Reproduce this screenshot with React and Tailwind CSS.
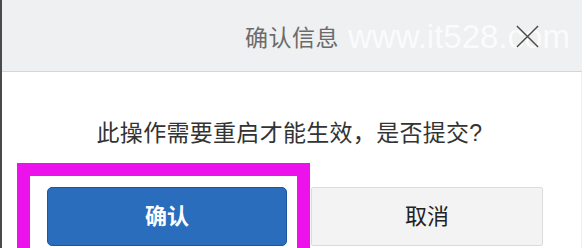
import React from "react";

const font = { fontFamily: '"Liberation Sans", "Noto Sans CJK SC", sans-serif' };

const App = () => {
  return (
    <div
      className="relative w-[588px] h-[248px] overflow-hidden bg-white border-l-2 border-[#4a4a4a]"
      style={font}
    >
      {/* Header */}
      <div className="relative flex items-center justify-center h-[72px] bg-[#eff0f1] border-b border-[#d4d6d8] mr-[6px]">
        <p className="text-[23px] text-[#6b6b6b] mt-[6px] tracking-[0.5px]">确认信息</p>
        <span className="absolute left-[346px] top-[12px] text-[33px] font-light text-white/75">
          www.it528.com
        </span>
        <button className="absolute left-[513px] top-[24px] w-[25px] h-[25px] text-[#4a4a4a]">
          <svg viewBox="0 0 26 26" className="w-full h-full" fill="none" stroke="currentColor" strokeWidth="1.5">
            <path d="M2 2 L24 24 M24 2 L2 24" />
          </svg>
        </button>
      </div>

      {/* Body */}
      <div className="flex flex-col items-center pt-[47px] mr-[6px] border-r border-[#eeeeee] h-full">
        <p className="text-[23px] text-[#333] leading-[28px] tracking-[0.3px] pr-[4px]">
          此操作需要重启才能生效，是否提交?
        </p>
        <div className="flex gap-[24px] mt-[40px] w-full pl-[45px]">
          <button className="w-[240px] h-[59px] rounded-[5px] bg-[#2a6dbd] border border-[#1d55a0] text-white text-[22px] font-bold">
            确认
          </button>
          <button className="w-[232px] h-[59px] rounded-[2px] bg-[#f3f3f3] border border-[#dcdcdc] text-[#222] text-[22px]">
            取消
          </button>
        </div>
      </div>

      {/* highlight annotation */}
      <div className="absolute left-[15px] top-[163px] w-[293px] h-[100px] border-[13px] border-[#ec12ec]" />
    </div>
  );
};

export default App;
